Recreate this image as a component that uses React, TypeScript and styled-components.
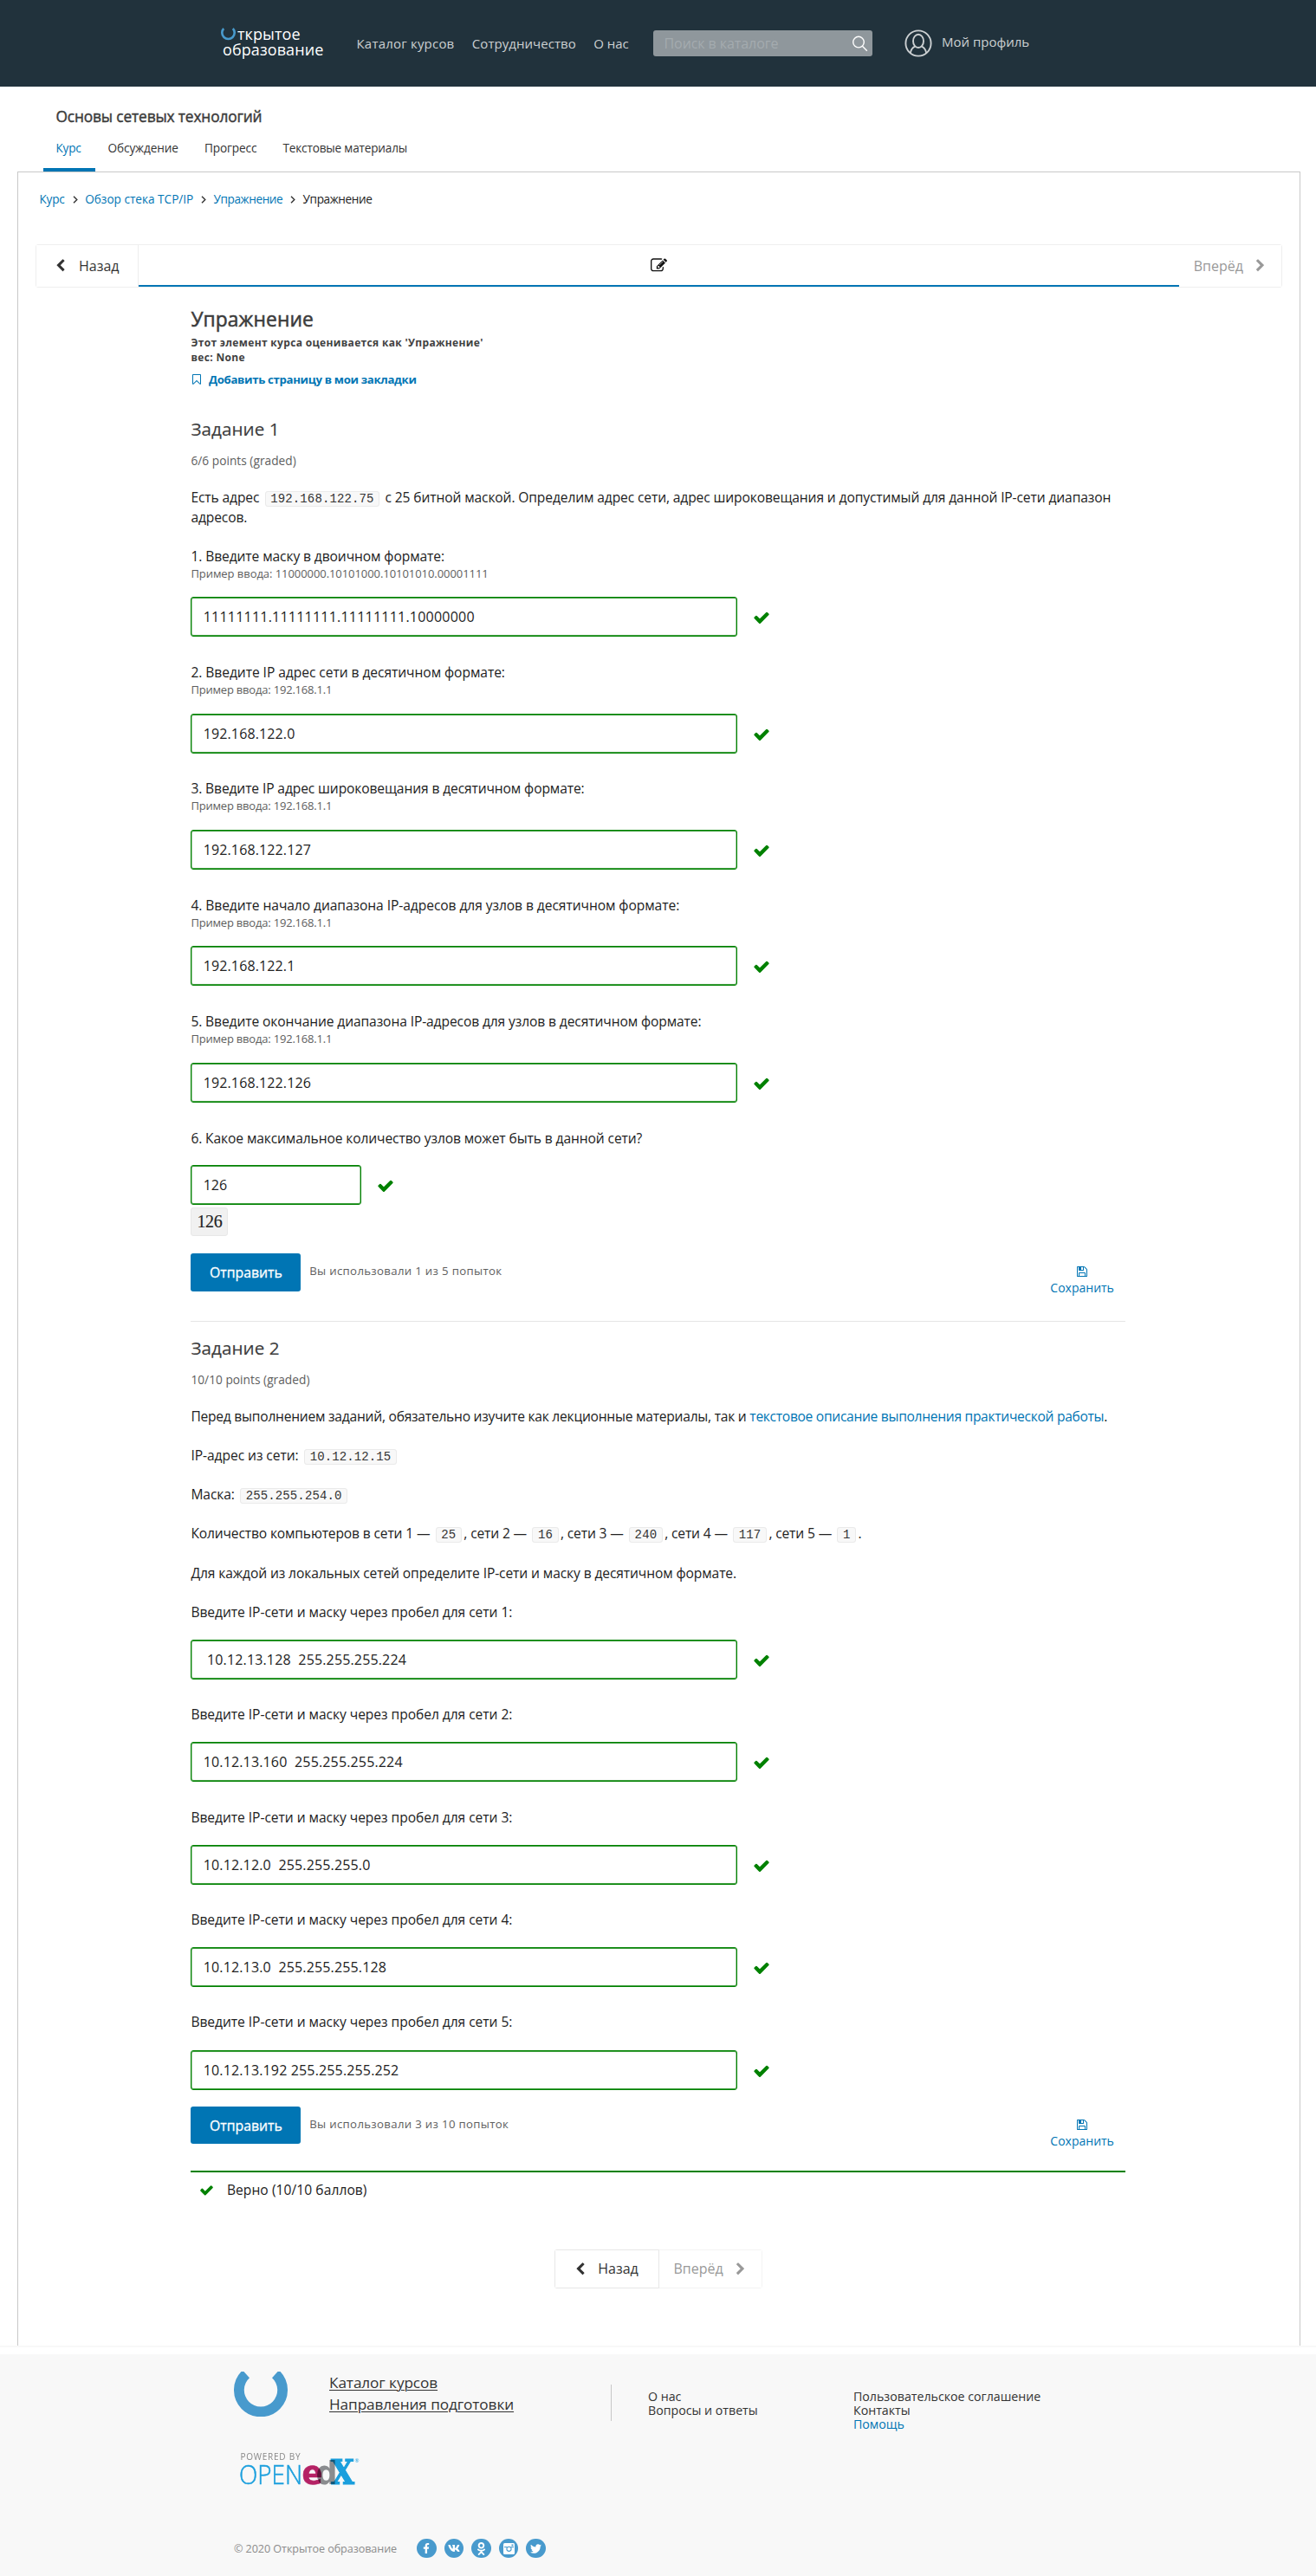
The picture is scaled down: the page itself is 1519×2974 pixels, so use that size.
import React from 'react';
import styled, { createGlobalStyle, css } from 'styled-components';
import { FaFacebookF, FaVk, FaOdnoklassniki, FaTwitter } from 'react-icons/fa';

const BLUE = '#0075b4';
const GREEN = '#008100';

const GlobalStyle = createGlobalStyle`
  * { box-sizing: border-box; }
  body { margin: 0; background: #fff; font-family: "Open Sans", "Noto Sans", sans-serif; color: #222; }
  a { color: inherit; text-decoration: none; }
  svg { display: block; flex: none; }
  p, h1, h2, h3 { margin: 0; }
`;

/* Letter spacing in px, shared by every text component. */
type Sp = { $ls?: number };
const spacing = css<Sp>`letter-spacing: ${p => p.$ls ?? 0}px;`;

const PATHS = {
  check: 'M1671 566q0 40-28 68l-724 724-136 136q-28 28-68 28t-68-28l-136-136-362-362q-28-28-28-68t28-68l136-136q28-28 68-28t68 28l294 295 656-657q28-28 68-28t68 28l136 136q28 28 28 68z',
  left: 'M1427 301l-531 531 531 531q19 19 19 45t-19 45l-166 166q-19 19-45 19t-45-19l-742-742q-19-19-19-45t19-45l742-742q19-19 45-19t45 19l166 166q19 19 19 45t-19 45z',
  right: 'M1363 877l-742 742q-19 19-45 19t-45-19l-166-166q-19-19-19-45t19-45l531-531-531-531q-19-19-19-45t19-45l166-166q19-19 45-19t45 19l742 742q19 19 19 45t-19 45z',
  edit: 'M888 1184l116-116-152-152-116 116v56h96v96h56zm440-720q-16-16-33 1l-350 350q-17 17-1 33t33-1l350-350q17-17 1-33zm80 594v190q0 119-84.5 203.5t-203.5 84.5h-832q-119 0-203.5-84.5t-84.5-203.5v-832q0-119 84.5-203.5t203.5-84.5h832q63 0 117 25 15 7 18 23 3 17-9 29l-49 49q-14 14-32 8-23-6-45-6h-832q-66 0-113 47t-47 113v832q0 66 47 113t113 47h832q66 0 113-47t47-113v-126q0-13 9-22l64-64q15-15 35-7t20 29zm-96-738l288 288-672 672h-288v-288zm444 132l-92 92-288-288 92-92q28-28 68-28t68 28l152 152q28 28 28 68t-28 68z',
  save: 'M512 1536h768v-384h-768v384zm896 0h128v-896q0-14-10-38.5t-20-34.5l-281-281q-10-10-34-20t-39-10v416q0 40-28 68t-68 28h-576q-40 0-68-28t-28-68v-416h-128v1280h128v-416q0-40 28-68t68-28h832q40 0 68 28t28 68v416zm-384-928v-320q0-13-9.5-22.5t-22.5-9.5h-192q-13 0-22.5 9.5t-9.5 22.5v320q0 13 9.5 22.5t22.5 9.5h192q13 0 22.5-9.5t9.5-22.5zm640 32v928q0 40-28 68t-68 28h-1344q-40 0-68-28t-28-68v-1344q0-40 28-68t68-28h928q40 0 88 20t76 48l280 280q28 28 48 76t20 88z',
  bookmark: 'M1408 256h-1024v1242l423-406 89-85 89 85 423 406v-1242zm12-128q23 0 44 9 33 13 52.5 41t19.5 62v1289q0 34-19.5 62t-52.5 41q-19 8-44 8-48 0-83-32l-441-424-441 424q-36 33-83 33-23 0-44-9-33-13-52.5-41t-19.5-62v-1289q0-34 19.5-62t52.5-41q21-9 44-9h1048z',
};

const Icon = ({ name, size }: { name: keyof typeof PATHS; size: number }) => (
  <svg width={size} height={size} viewBox="0 0 1792 1792" fill="currentColor"><path d={PATHS[name]} /></svg>
);

/* ---------- Header ---------- */
const Header = styled.header`
  display: flex;
  align-items: flex-start;
  height: 100px;
  padding-left: 255px;
  background: #21323c;
  color: #ccd0d2;
`;
const Logo = styled.a`
  width: 156.5px;
  padding-top: 30px;
  color: #fff;
  font-size: 18px;
  line-height: 18px;
`;
const LogoLine = styled.span<Sp & { $indent?: number }>`
  display: flex;
  padding-left: ${p => p.$indent ?? 0}px;
  ${spacing}
`;
const LogoMark = styled.svg` margin: 2px 2px 0 0; `;
const TopNav = styled.nav`
  display: flex;
  gap: 20.4px;
  width: 342px;
  padding-top: 40px;
  font-size: 15px;
  line-height: 20px;
  white-space: nowrap;
`;
const NavLink = styled.a<Sp>`${spacing}`;
const Search = styled.label`
  display: flex;
  align-items: center;
  justify-content: space-between;
  width: 253px;
  height: 30px;
  margin-top: 35px;
  padding: 0 5px 0 13px;
  border-radius: 3px;
  background: #8f979c;
  color: #a4abaf;
  font-size: 16px;
  letter-spacing: -0.07px;
`;
const Profile = styled.a`
  display: flex;
  margin: 34px 0 0 37.5px;
  gap: 11px;
  font-size: 15px;
  line-height: 28px;
`;

/* ---------- Course heading ---------- */
const CourseHead = styled.section`
  height: 98px;
  padding: 23px 0 0 50px;
`;
const CourseTitle = styled.h1`
  padding-left: 14.5px;
  font-size: 17.3px;
  font-weight: 400;
  line-height: 24px;
  letter-spacing: -0.13px;
  color: #3c3c3c;
  -webkit-text-stroke: 0.45px #3c3c3c;
`;
const Tabs = styled.nav` display: flex; height: 51px; `;
const Tab = styled.a<Sp & { $w: number; $active?: boolean }>`
  width: ${p => p.$w}px;
  padding: 13.5px 0 0 14.5px;
  border-bottom: 4px solid ${p => (p.$active ? BLUE : 'transparent')};
  color: ${p => (p.$active ? BLUE : '#333')};
  font-size: 13.6px;
  line-height: 20px;
  white-space: nowrap;
  ${spacing}
`;

/* ---------- Course frame ---------- */
const Frame = styled.main`
  width: 1481px;
  height: 2510px;
  margin-left: 20px;
  border: 1px solid #c8c8c8;
  border-bottom: 0;
`;
const Crumbs = styled.nav`
  display: flex;
  align-items: center;
  height: 20px;
  margin: 21px 0 42px 24.5px;
  font-size: 13.6px;
  line-height: 20px;
  color: ${BLUE};
`;
const Crumb = styled.span<Sp & { $w: number; $current?: boolean }>`
  width: ${p => p.$w}px;
  color: ${p => (p.$current ? '#222' : BLUE)};
  white-space: nowrap;
  ${spacing}
`;
const CrumbArrow = styled.svg` margin: 1px 8.6px 0; `;
const SequenceBar = styled.div`
  display: flex;
  width: 1439px;
  height: 50px;
  margin-left: 20px;
  border: 1px solid #eee;
  border-radius: 3px;
`;
const StepButton = styled.button<{ $w: number; $faded?: boolean }>`
  display: flex;
  align-items: center;
  justify-content: center;
  gap: ${p => (p.$faded ? 12 : 13)}px;
  width: ${p => p.$w}px;
  padding: ${p => (p.$faded ? '0' : '0 2px 0 0')};
  border: 0;
  background: #fff;
  color: ${p => (p.$faded ? '#999' : '#333')};
  font: 16px "Open Sans", sans-serif;
`;
const ActiveStep = styled.div`
  display: flex;
  flex: 1;
  align-items: center;
  justify-content: center;
  border-bottom: 2px solid ${BLUE};
  box-shadow: -1px 0 0 #eee, 1px 0 0 #eee;
  color: #111;
`;

/* ---------- Unit content ---------- */
const Unit = styled.article`
  width: 1079px;
  margin: 21px 0 0 199.4px;
`;
const UnitTitle = styled.h2`
  font-size: 22.8px;
  font-weight: 400;
  line-height: 31px;
  height: 30px;
  color: #3c3c3c;
  letter-spacing: 0.1px;
  -webkit-text-stroke: 0.5px #3c3c3c;
`;
const UnitMeta = styled.p`
  padding-top: 3.6px;
  font-size: 12px;
  font-weight: 700;
  line-height: 17.5px;
  letter-spacing: 0.33px;
  color: #414141;
`;
const Bookmark = styled.a`
  display: flex;
  align-items: center;
  gap: 6.5px;
  height: 20px;
  margin: 6.4px 0 33px;
  color: ${BLUE};
  font-size: 13.2px;
  font-weight: 700;
  letter-spacing: -0.32px;
`;
const ProblemTitle = styled.h3`
  font-size: 20.6px;
  font-weight: 400;
  line-height: 28px;
  letter-spacing: 0.08px;
  color: #3c3c3c;
  -webkit-text-stroke: 0.15px #3c3c3c;
`;
const Points = styled.p`
  padding: 12.7px 0 21px;
  font-size: 13.7px;
  line-height: 20px;
  letter-spacing: 0.03px;
  color: #5e5e5e;
`;
const Para = styled.p<Sp & { $gap?: number }>`
  margin-bottom: ${p => p.$gap ?? 22.2}px;
  font-size: 15.6px;
  line-height: 23px;
  white-space: nowrap;
  ${spacing}
`;
const Part = styled.span<Sp & { $link?: boolean }>`
  ${spacing}
  ${p => p.$link && `color: ${BLUE};`}
`;
const Code = styled.code`
  margin: 0 2.5px;
  padding: 0 5.5px;
  border: 1px solid #eaeaea;
  border-radius: 3px;
  background: #f8f8f8;
  color: #333;
  font: 14px "Liberation Mono", monospace;
  letter-spacing: 0.12px;
`;
const Question = styled.section<{ $h: number }>` height: ${p => p.$h}px; `;
const Label = styled.p<Sp>`
  font-size: 15.6px;
  line-height: 23px;
  white-space: nowrap;
  ${spacing}
`;
const Hint = styled.p<Sp>`
  font-size: 13px;
  line-height: 17px;
  height: 18px;
  color: #5e5e5e;
  ${spacing}
`;
const AnswerRow = styled.div<{ $top: number }>`
  display: flex;
  align-items: center;
  gap: 18px;
  padding-top: ${p => p.$top}px;
  color: ${GREEN};

  > svg { margin-top: 2px; }
`;
const Answer = styled.div<Sp & { $w?: number }>`
  width: ${p => p.$w ?? 631}px;
  height: 46px;
  padding-left: 13.3px;
  border: 1px solid ${GREEN};
  border-radius: 3px;
  box-shadow: inset 0 1px 0 rgba(0, 129, 0, 0.6), inset 0 -1px 0 rgba(0, 129, 0, 0.6), inset 0 0 0 1px rgba(0, 129, 0, 0.35), inset 0 0 3px rgba(0, 0, 0, 0.12);
  color: #222;
  font-size: 16px;
  line-height: 45px;
  white-space: pre;
  ${spacing}
`;
const MathPreview = styled.div`
  width: 43px;
  height: 33px;
  margin-top: 3px;
  border: 1px solid #e8e8e8;
  border-radius: 3px;
  background: #f1f1f1;
  font: 20px/31px "Liberation Serif", serif;
  letter-spacing: -0.4px;
  text-align: center;
  -webkit-text-stroke: 0.15px #222;
`;
const Actions = styled.div<{ $top: number; $h: number }>`
  display: flex;
  align-items: flex-start;
  height: ${p => p.$h}px;
  padding-top: ${p => p.$top}px;
`;
const Submit = styled.button`
  width: 127px;
  height: 43.5px;
  padding: 0;
  border: 0;
  border-radius: 3px;
  background: ${BLUE};
  color: #fff;
  font: 15.8px "Open Sans", sans-serif;
  letter-spacing: 0;
  -webkit-text-stroke: 0.3px #fff;
`;
const Attempts = styled.span`
  flex: 1;
  padding: 10px 0 0 9.8px;
  font-size: 13.2px;
  line-height: 20px;
  letter-spacing: 0.33px;
  color: #5e5e5e;
`;
const Save = styled.a`
  display: flex;
  flex-direction: column;
  align-items: center;
  gap: 2px;
  margin-right: 13.5px;
  padding-top: 14px;
  color: ${BLUE};
  font-size: 14px;
  line-height: 20px;
`;
const Rule = styled.div`
  height: 1px;
  margin-bottom: 16px;
  background: #e5e5e5;
`;
const Verdict = styled.div`
  display: flex;
  align-items: center;
  gap: 15px;
  height: 43px;
  padding: 0 0 0 9.5px;
  border-top: 2px solid ${GREEN};
  color: ${GREEN};
  font-size: 15.6px;
`;
const VerdictText = styled.span` color: #222; letter-spacing: 0.06px; `;
const BottomNav = styled.nav`
  display: flex;
  width: 240px;
  height: 45px;
  margin: 48px 0 0 619px;
  border: 1px solid #f3f3f3;
  border-radius: 3px;
`;
const BackCell = styled.div`
  display: flex;
  margin: -1px 0 -1px -1px;
  border: 1px solid #e7e7e7;
  border-radius: 3px 0 0 3px;
`;

/* ---------- Footer ---------- */
const FooterGap = styled.div`
  height: 10px;
  border-top: 2px solid #f8f8f8;
`;
const Footer = styled.footer`
  height: 256px;
  padding: 20px 0 0 270px;
  background: #f8f8f8;
  color: #333;
`;
const FooterTop = styled.div` display: flex; height: 98px; `;
const MainLinks = styled.div`
  display: flex;
  flex-direction: column;
  width: 325px;
  margin-left: 48px;
  font-size: 17.2px;
  line-height: 25.3px;
  letter-spacing: -0.08px;
  text-decoration: underline;
  text-decoration-thickness: 1px;
  text-underline-offset: 2px;
`;
const SideLinks = styled.div<{ $w: number; $first?: boolean }>`
  display: flex;
  flex-direction: column;
  width: ${p => p.$w}px;
  height: 42px;
  margin-top: 15px;
  padding: ${p => (p.$first ? '6px 0 0 42px' : '6px 0 0')};
  border-left: ${p => (p.$first ? '1px solid #c8c8c8' : '0')};
  font-size: 14.2px;
  line-height: 16px;
  white-space: nowrap;
`;
const HelpLink = styled.a` color: ${BLUE}; `;
const EdxLogo = styled.svg` overflow: visible; isolation: isolate; `;
const Overlap = styled.text` mix-blend-mode: multiply; `;
const FooterBottom = styled.div`
  display: flex;
  align-items: center;
  gap: 9px;
  height: 24px;
  margin-top: 60px;
`;
const Copyright = styled.span`
  width: 202px;
  font-size: 12.6px;
  letter-spacing: -0.07px;
  white-space: nowrap;
  color: #8c8c8c;
`;
const Social = styled.a`
  display: flex;
  align-items: center;
  justify-content: center;
  width: 22.6px;
  height: 22.6px;
  border-radius: 50%;
  background: #489acd;
  color: #fff;
`;

const Arrow = () => (
  <CrumbArrow width="6" height="9" viewBox="0 0 6 9" fill="none" stroke="#333" strokeWidth="1.4"><path d="M1 .8l3.8 3.7L1 8.2" /></CrumbArrow>
);

const SaveLink = () => <Save><Icon name="save" size={14} /><span>Сохранить</span></Save>;

const TASK1 = [
  { q: '1. Введите маску в двоичном формате:', ls: -0.1, hint: '11000000.10101000.10101010.00001111', hls: -0.06, a: '11111111.11111111.11111111.10000000', als: 0.22 },
  { q: '2. Введите IP адрес сети в десятичном формате:', ls: -0.06, hint: '192.168.1.1', hls: -0.2, a: '192.168.122.0', als: 0.13 },
  { q: '3. Введите IP адрес широковещания в десятичном формате:', ls: -0.12, hint: '192.168.1.1', hls: -0.2, a: '192.168.122.127', als: 0.13 },
  { q: '4. Введите начало диапазона IP-адресов для узлов в десятичном формате:', ls: -0.07, hint: '192.168.1.1', hls: -0.2, a: '192.168.122.1', als: 0.13 },
  { q: '5. Введите окончание диапазона IP-адресов для узлов в десятичном формате:', ls: -0.11, hint: '192.168.1.1', hls: -0.2, a: '192.168.122.126', als: 0.13 },
];

const TASK2 = [
  ' 10.12.13.128  255.255.255.224',
  '10.12.13.160  255.255.255.224',
  '10.12.12.0  255.255.255.0',
  '10.12.13.0  255.255.255.128',
  '10.12.13.192 255.255.255.252',
];

const HOSTS = ['25', '16', '240', '117', '1'];

export default function App() {
  return (
    <>
      <GlobalStyle />
      <Header>
        <Logo>
          <LogoLine $ls={0.1}>
            <LogoMark width="17" height="16" viewBox="0 0 17 16" fill="none" stroke="#489acd" strokeWidth="2.6"><path d="M3.2 1A7.2 7.2 0 1 0 13.8 1" /></LogoMark>
            ткрытое
          </LogoLine>
          <LogoLine $indent={2} $ls={0.1}>образование</LogoLine>
        </Logo>
        <TopNav>
          <NavLink $ls={0.2}>Каталог курсов</NavLink>
          <NavLink $ls={0.05}>Сотрудничество</NavLink>
          <NavLink>О нас</NavLink>
        </TopNav>
        <Search>
          Поиск в каталоге
          <svg width="19" height="19" viewBox="0 0 19 19" fill="none" stroke="#fff" strokeWidth="1.4"><circle cx="8" cy="7.6" r="6.3" /><path d="M12.4 12.2l5.4 5.6" /></svg>
        </Search>
        <Profile>
          <svg width="32" height="32" viewBox="0 0 32 32" fill="none" stroke="#ccd0d2" strokeWidth="1.9"><circle cx="16" cy="16" r="14.6" /><ellipse cx="16" cy="13.4" rx="6" ry="7.6" /><path d="M6.8 27.2c.6-3.6 2.2-6.2 5.4-7.6M25.2 27.2c-.6-3.6-2.2-6.2-5.4-7.6" /></svg>
          Мой профиль
        </Profile>
      </Header>

      <CourseHead>
        <CourseTitle>Основы сетевых технологий</CourseTitle>
        <Tabs>
          <Tab $w={60} $active $ls={-0.2}>Курс</Tab>
          <Tab $w={111.5} $ls={-0.09}>Обсуждение</Tab>
          <Tab $w={90.5} $ls={-0.1}>Прогресс</Tab>
          <Tab $w={180} $ls={-0.18}>Текстовые материалы</Tab>
        </Tabs>
      </CourseHead>

      <Frame>
        <Crumbs>
          <Crumb $w={29.5} $ls={-0.2}>Курс</Crumb><Arrow />
          <Crumb $w={125}>Обзор стека TCP/IP</Crumb><Arrow />
          <Crumb $w={80} $ls={-0.38}>Упражнение</Crumb><Arrow />
          <Crumb $w={80} $ls={-0.38} $current>Упражнение</Crumb>
        </Crumbs>
        <SequenceBar>
          <StepButton $w={118}><Icon name="left" size={15.5} />Назад</StepButton>
          <ActiveStep><Icon name="edit" size={19} /></ActiveStep>
          <StepButton $w={118} $faded>Вперёд<Icon name="right" size={15.5} /></StepButton>
        </SequenceBar>

        <Unit>
          <UnitTitle>Упражнение</UnitTitle>
          <UnitMeta>Этот элемент курса оценивается как 'Упражнение'<br />вес: None</UnitMeta>
          <Bookmark><Icon name="bookmark" size={14} />Добавить страницу в мои закладки</Bookmark>

          <ProblemTitle>Задание 1</ProblemTitle>
          <Points>6/6 points (graded)</Points>
          <Para $ls={-0.12} $gap={22}>
            Есть адрес <Code>192.168.122.75</Code> с 25 битной маской. Определим адрес сети, адрес широковещания и допустимый для данной IP-сети диапазон<br />адресов.
          </Para>
          {TASK1.map(t => (
            <Question key={t.q} $h={134.4}>
              <Label $ls={t.ls}>{t.q}</Label>
              <Hint $ls={t.hls}>Пример ввода: {t.hint}</Hint>
              <AnswerRow $top={17.5}><Answer $ls={t.als}>{t.a}</Answer><Icon name="check" size={20} /></AnswerRow>
            </Question>
          ))}
          <Question $h={125}>
            <Label $ls={-0.11}>6. Какое максимальное количество узлов может быть в данной сети?</Label>
            <AnswerRow $top={19.5}><Answer $w={197}>126</Answer><Icon name="check" size={20} /></AnswerRow>
            <MathPreview>126</MathPreview>
          </Question>
          <Actions $top={19.5} $h={97.5}>
            <Submit>Отправить</Submit>
            <Attempts>Вы использовали 1 из 5 попыток</Attempts>
            <SaveLink />
          </Actions>
          <Rule />

          <ProblemTitle>Задание 2</ProblemTitle>
          <Points>10/10 points (graded)</Points>
          <Para>
            <Part $ls={-0.24}>Перед выполнением заданий, обязательно изучите как лекционные материалы, так и </Part>
            <Part $ls={-0.3} $link>текстовое описание выполнения практической работы</Part>.
          </Para>
          <Para $ls={-0.06}>IP-адрес из сети: <Code>10.12.12.15</Code></Para>
          <Para $ls={-0.1}>Маска: <Code>255.255.254.0</Code></Para>
          <Para $ls={-0.15}>
            Количество компьютеров в {HOSTS.map((n, i) => <React.Fragment key={n}>сети {i + 1} — <Code>{n}</Code>{i < 4 ? ', ' : '.'}</React.Fragment>)}
          </Para>
          <Para $ls={-0.11}>Для каждой из локальных сетей определите IP-сети и маску в десятичном формате.</Para>
          {TASK2.map((a, i) => (
            <Question key={a} $h={i === 4 ? 108.6 : 118.4}>
              <Label $ls={-0.05}>Введите IP-сети и маску через пробел для сети {i + 1}:</Label>
              <AnswerRow $top={20.2}><Answer $ls={0.15}>{a}</Answer><Icon name="check" size={20} /></AnswerRow>
            </Question>
          ))}
          <Actions $top={0} $h={74}>
            <Submit>Отправить</Submit>
            <Attempts>Вы использовали 3 из 10 попыток</Attempts>
            <SaveLink />
          </Actions>
          <Verdict><Icon name="check" size={17} /><VerdictText>Верно (10/10 баллов)</VerdictText></Verdict>
        </Unit>

        <BottomNav>
          <BackCell><StepButton $w={118.5}><Icon name="left" size={15.5} />Назад</StepButton></BackCell>
          <StepButton $w={121} $faded>Вперёд<Icon name="right" size={15.5} /></StepButton>
        </BottomNav>
      </Frame>

      <FooterGap />
      <Footer>
        <FooterTop>
          <svg width="62" height="52" viewBox="0 0 62 52" fill="none" stroke="#489acd" strokeWidth="11.8"><path d="M14 2.8A25.1 25.1 0 1 0 48 2.8" /></svg>
          <MainLinks><a>Каталог курсов</a><a>Направления подготовки</a></MainLinks>
          <SideLinks $w={280} $first><a>О нас</a><a>Вопросы и ответы</a></SideLinks>
          <SideLinks $w={230}><a>Пользовательское соглашение</a><a>Контакты</a><HelpLink>Помощь</HelpLink></SideLinks>
        </FooterTop>
        <EdxLogo width="146" height="34" viewBox="0 0 146 34" fontFamily="Open Sans, sans-serif">
          <text x="7.5" y="4" fontSize="10" fill="#888" textLength="69">POWERED BY</text>
          <text x="6" y="32" fontSize="30.5" fontWeight="300" fill="#1b9fdd" stroke="#1b9fdd" strokeWidth=".5" textLength="73" lengthAdjust="spacingAndGlyphs">OPEN</text>
          <Overlap x="78.5" y="31.5" fontSize="38" fontWeight="700" fontFamily="DejaVu Sans" fill="#b52265" stroke="#b52265" strokeWidth=".6" textLength="24" lengthAdjust="spacingAndGlyphs">e</Overlap>
          <Overlap x="94.5" y="31.5" fontSize="38" fontWeight="700" fontFamily="DejaVu Sans" fill="#8a8c8f" textLength="25" lengthAdjust="spacingAndGlyphs">d</Overlap>
          <Overlap x="112" y="31.7" fontSize="39" fontWeight="700" fontFamily="DejaVu Serif" fill="#1b9fdd" stroke="#1b9fdd" strokeWidth="1.2" textLength="27" lengthAdjust="spacingAndGlyphs">X</Overlap>
          <text x="139.5" y="7" fontSize="6" fill="#1b9fdd">®</text>
        </EdxLogo>
        <FooterBottom>
          <Copyright>© 2020 Открытое образование</Copyright>
          <Social><FaFacebookF size={12} /></Social>
          <Social><FaVk size={14} /></Social>
          <Social><FaOdnoklassniki size={15} /></Social>
          <Social>
            <svg width="13" height="13" viewBox="0 0 13 13"><rect width="13" height="13" rx="1.5" fill="#fff" /><path d="M1 4.6h3.2M8.8 4.6H12" stroke="#489acd" /><circle cx="6.5" cy="6.8" r="2.6" fill="none" stroke="#489acd" strokeWidth="1.1" /><path d="M9.5 1.5h2v1.8h-2z" fill="#489acd" /></svg>
          </Social>
          <Social><FaTwitter size={13} /></Social>
        </FooterBottom>
      </Footer>
    </>
  );
}
